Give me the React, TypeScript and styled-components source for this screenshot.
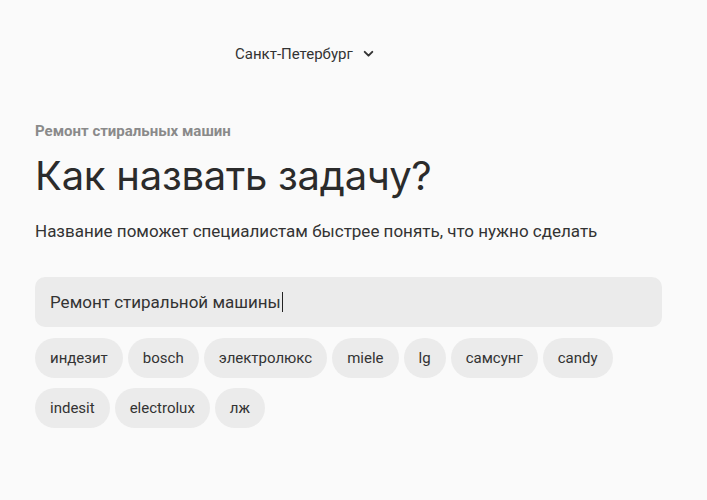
import React from 'react'
import styled, { createGlobalStyle } from 'styled-components';

const GlobalStyle = createGlobalStyle`
    body {
        margin: 0;
        background: #fafafa;
        font-family: Roboto, "Liberation Sans", sans-serif;
        color: #333;
    }
`;

const Page = styled.div`
    width: 707px;
    height: 500px;
    padding: 0 45px 0 35px;
    box-sizing: border-box;
    display: flex;
    flex-direction: column;
`;

const Header = styled.div`
    height: 108px;
    display: flex;
    align-items: center;
    padding-left: 200px;
    padding-bottom: 1px;
    margin-bottom: 14px;
    box-sizing: border-box;
`;

const City = styled.button`
    display: flex;
    align-items: center;
    gap: 9px;
    border: none;
    background: none;
    padding: 0;
    font-family: inherit;
    font-size: 15px;
    color: #333;
    cursor: pointer;
`;

const Category = styled.div`
    font-size: 15px;
    font-weight: 700;
    color: #8a8a8a;
    line-height: 18px;
`;

const Title = styled.h1`
    margin: 12px 0 0;
    font-family: Inter, Roboto, sans-serif;
    font-weight: 400;
    font-size: 40px;
    letter-spacing: -0.25px;
    line-height: 48px;
    color: #2b2b2b;
`;

const Subtitle = styled.p`
    margin: 20px 0 0;
    font-size: 17px;
    line-height: 22px;
    color: #333;
`;

const InputBox = styled.div`
    margin-top: 35px;
    height: 50px;
    border-radius: 10px;
    background: #ebebeb;
    display: flex;
    align-items: center;
    padding: 0 15px;
    font-size: 17px;
    color: #333;
`;

const Caret = styled.span`
    display: inline-block;
    width: 1px;
    height: 20px;
    background: #222;
    margin-left: 1px;
    vertical-align: middle;
`;

const Chips = styled.div`
    margin-top: 11px;
    display: flex;
    flex-wrap: wrap;
    gap: 10px 5px;
    width: 600px;
`;

const Chip = styled.div`
    height: 40px;
    border-radius: 20px;
    background: #ebebeb;
    padding: 0 15px;
    display: flex;
    align-items: center;
    font-size: 15px;
    color: #333;
`;

const tags = ['индезит', 'bosch', 'электролюкс', 'miele', 'lg', 'самсунг', 'candy', 'indesit', 'electrolux', 'лж'];

function App() {
    return (
        <Page>
            <GlobalStyle />
            <Header>
                <City>
                    Санкт-Петербург
                    <svg width="13" height="13" viewBox="0 0 12 12" fill="none">
                        <path d="M2.5 4.5 L6 8 L9.5 4.5" stroke="#333" strokeWidth="1.8" strokeLinecap="round" strokeLinejoin="round" />
                    </svg>
                </City>
            </Header>
            <Category>Ремонт стиральных машин</Category>
            <Title>Как назвать задачу?</Title>
            <Subtitle>Название поможет специалистам быстрее понять, что нужно сделать</Subtitle>
            <InputBox>
                Ремонт стиральной машины<Caret />
            </InputBox>
            <Chips>
                {tags.map((t) => (
                    <Chip key={t}>{t}</Chip>
                ))}
            </Chips>
        </Page>
    )
}

export default App;
